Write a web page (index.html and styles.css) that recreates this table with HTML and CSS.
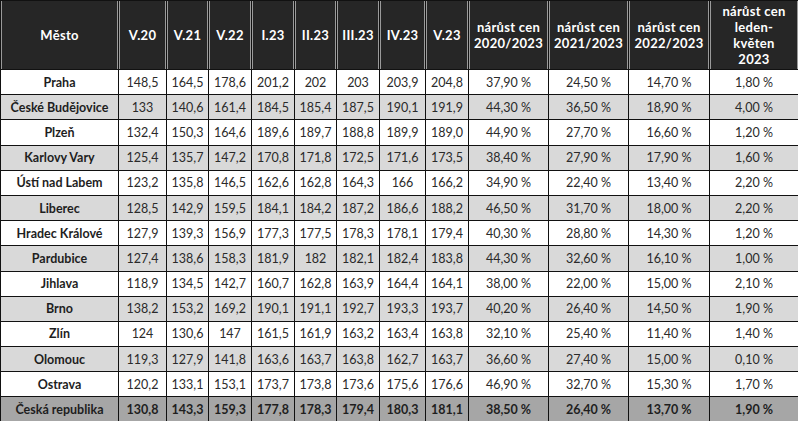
FILE: index.html
```html
<!DOCTYPE html>
<html lang="cs">
<head>
<meta charset="utf-8">
<title>Ceny</title>
<link rel="stylesheet" href="styles.css">
</head>
<body>
<table class="grid">
<colgroup>
<col style="width:118px"><col style="width:48px"><col style="width:42px"><col style="width:43px"><col style="width:43px"><col style="width:42px"><col style="width:43px"><col style="width:46px"><col style="width:43px"><col style="width:80px"><col style="width:80px"><col style="width:81px"><col style="width:89px">
</colgroup>
<thead>
<tr class="head">
<th>Město</th><th>V.20</th><th>V.21</th><th>V.22</th><th>I.23</th><th>II.23</th><th>III.23</th><th>IV.23</th><th>V.23</th>
<th>nárůst cen<br>2020/2023</th><th>nárůst cen<br>2021/2023</th><th>nárůst cen<br>2022/2023</th><th>nárůst cen<br>leden-<br>květen<br>2023</th>
</tr>
</thead>
<tbody>
<tr class="odd"><td class="city">Praha</td><td>148,5</td><td>164,5</td><td>178,6</td><td>201,2</td><td>202</td><td>203</td><td>203,9</td><td>204,8</td><td>37,90 %</td><td>24,50 %</td><td>14,70 %</td><td>1,80 %</td></tr>
<tr class="even"><td class="city">České Budějovice</td><td>133</td><td>140,6</td><td>161,4</td><td>184,5</td><td>185,4</td><td>187,5</td><td>190,1</td><td>191,9</td><td>44,30 %</td><td>36,50 %</td><td>18,90 %</td><td>4,00 %</td></tr>
<tr class="odd"><td class="city">Plzeň</td><td>132,4</td><td>150,3</td><td>164,6</td><td>189,6</td><td>189,7</td><td>188,8</td><td>189,9</td><td>189,0</td><td>44,90 %</td><td>27,70 %</td><td>16,60 %</td><td>1,20 %</td></tr>
<tr class="even"><td class="city">Karlovy Vary</td><td>125,4</td><td>135,7</td><td>147,2</td><td>170,8</td><td>171,8</td><td>172,5</td><td>171,6</td><td>173,5</td><td>38,40 %</td><td>27,90 %</td><td>17,90 %</td><td>1,60 %</td></tr>
<tr class="odd"><td class="city">Ústí nad Labem</td><td>123,2</td><td>135,8</td><td>146,5</td><td>162,6</td><td>162,8</td><td>164,3</td><td>166</td><td>166,2</td><td>34,90 %</td><td>22,40 %</td><td>13,40 %</td><td>2,20 %</td></tr>
<tr class="even"><td class="city">Liberec</td><td>128,5</td><td>142,9</td><td>159,5</td><td>184,1</td><td>184,2</td><td>187,2</td><td>186,6</td><td>188,2</td><td>46,50 %</td><td>31,70 %</td><td>18,00 %</td><td>2,20 %</td></tr>
<tr class="odd"><td class="city">Hradec Králové</td><td>127,9</td><td>139,3</td><td>156,9</td><td>177,3</td><td>177,5</td><td>178,3</td><td>178,1</td><td>179,4</td><td>40,30 %</td><td>28,80 %</td><td>14,30 %</td><td>1,20 %</td></tr>
<tr class="even"><td class="city">Pardubice</td><td>127,4</td><td>138,6</td><td>158,3</td><td>181,9</td><td>182</td><td>182,1</td><td>182,4</td><td>183,8</td><td>44,30 %</td><td>32,60 %</td><td>16,10 %</td><td>1,00 %</td></tr>
<tr class="odd"><td class="city">Jihlava</td><td>118,9</td><td>134,5</td><td>142,7</td><td>160,7</td><td>162,8</td><td>163,9</td><td>164,4</td><td>164,1</td><td>38,00 %</td><td>22,00 %</td><td>15,00 %</td><td>2,10 %</td></tr>
<tr class="even"><td class="city">Brno</td><td>138,2</td><td>153,2</td><td>169,2</td><td>190,1</td><td>191,1</td><td>192,7</td><td>193,3</td><td>193,7</td><td>40,20 %</td><td>26,40 %</td><td>14,50 %</td><td>1,90 %</td></tr>
<tr class="odd"><td class="city">Zlín</td><td>124</td><td>130,6</td><td>147</td><td>161,5</td><td>161,9</td><td>163,2</td><td>163,4</td><td>163,8</td><td>32,10 %</td><td>25,40 %</td><td>11,40 %</td><td>1,40 %</td></tr>
<tr class="even"><td class="city">Olomouc</td><td>119,3</td><td>127,9</td><td>141,8</td><td>163,6</td><td>163,7</td><td>163,8</td><td>162,7</td><td>163,7</td><td>36,60 %</td><td>27,40 %</td><td>15,00 %</td><td>0,10 %</td></tr>
<tr class="odd"><td class="city">Ostrava</td><td>120,2</td><td>133,1</td><td>153,1</td><td>173,7</td><td>173,8</td><td>173,6</td><td>175,6</td><td>176,6</td><td>46,90 %</td><td>32,70 %</td><td>15,30 %</td><td>1,70 %</td></tr>
<tr class="total"><td class="city">Česká republika</td><td>130,8</td><td>143,3</td><td>159,3</td><td>177,8</td><td>178,3</td><td>179,4</td><td>180,3</td><td>181,1</td><td>38,50 %</td><td>26,40 %</td><td>13,70 %</td><td>1,90 %</td></tr>
</tbody>
</table>
</body>
</html>
```
FILE: styles.css
```css
html, body {
  margin: 0;
  padding: 0;
  background: #ffffff;
}
body {
  font-family: "Lato", "DejaVu Sans", sans-serif;
}
.grid {
  border-collapse: collapse;
  table-layout: fixed;
  width: 798px;
}
.grid th,
.grid td {
  border: 1px solid #111111;
  padding: 0;
  text-align: center;
  overflow: hidden;
  white-space: nowrap;
}
.head th {
  height: 68px;
  background: #262626;
  color: #ffffff;
  font-weight: 700;
  font-size: 13px;
  line-height: 16px;
  letter-spacing: 0.3px;
  box-shadow: inset 1px 0 0 #9a9a9a, inset -1px 0 0 #9a9a9a;
}
.grid td {
  height: 24.2px;
  font-size: 12.5px;
  color: #2a2a2a;
  font-weight: 400;
}
.grid td.city {
  font-weight: 700;
  font-size: 12.5px;
  color: #1e1e1e;
}
.odd td {
  background: #ffffff;
}
.even td {
  background: #d9d9d9;
}
.total td {
  background: #a6a6a6;
  font-weight: 700;
  color: #1e1e1e;
}
```
